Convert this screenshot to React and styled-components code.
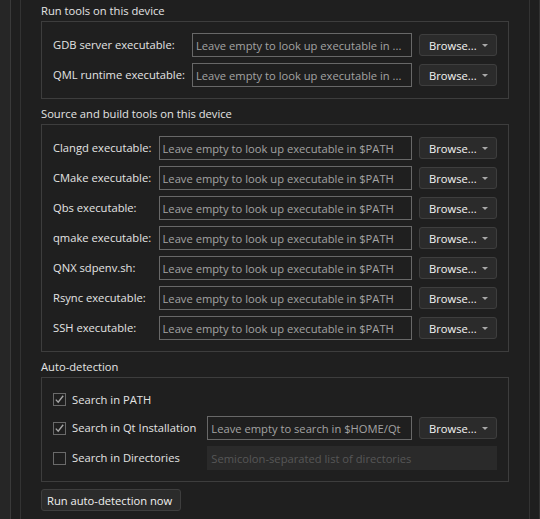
import React from 'react';
import styled, { createGlobalStyle } from 'styled-components';

const Global = createGlobalStyle`
  html, body { margin: 0; padding: 0; background: #1f1f1f; }
  body {
    font-family: "Open Sans", "Noto Sans", sans-serif;
    font-size: 11.2px;
    color: #e4e4e4;
  }
  * { box-sizing: border-box; }
`;

const Window = styled.div`
  display: flex;
  width: 540px;
  height: 519px;
  overflow: hidden;
  background: #1f1f1f;
`;

const SideRail = styled.div`
  flex: 0 0 11px;
  background: #262626;
  border-right: 1px solid #3a3a3a;
`;

const Gutter = styled.div`
  flex: 0 0 ${p => p.$w}px;
  border-right: ${p => (p.$line ? '1px solid #333333' : 'none')};
`;

const ScrollArea = styled.div`
  flex: 0 0 510px;
  border-left: 1px solid #333333;
  border-right: 1px solid #333333;
  padding: 3px 20px 0;
  display: flex;
  flex-direction: column;
  gap: 7px;
`;

const GroupBox = styled.section`
  display: flex;
  flex-direction: column;
`;

const GroupTitle = styled.div`
  line-height: 16px;
  margin-bottom: 2px;
  padding-top: 1px;
  margin-top: -1px;
  color: #e4e4e4;
`;

const Frame = styled.div`
  border: 1px solid #3d3d3d;
  padding: 11px;
  display: grid;
  grid-template-columns: auto 1fr auto;
  column-gap: 7px;
  row-gap: 6px;
  align-items: center;
`;

const Label = styled.label`
  line-height: 16px;
  white-space: nowrap;
  color: #e4e4e4;
`;

const PathInput = styled.input`
  height: 24px;
  min-width: 0;
  width: 100%;
  padding: 0 3px;
  font: inherit;
  color: #e4e4e4;
  background: ${p => (p.disabled ? '#2a2a2a' : '#1f1f1f')};
  border: 1px solid ${p => (p.disabled ? '#2a2a2a' : '#686868')};
  border-radius: 0;
  outline: none;
  text-overflow: ellipsis;
  grid-column: ${p => (p.$span ? '2 / span 2' : 'auto')};
  &::placeholder {
    color: ${p => (p.disabled ? '#575757' : '#a3a3a3')};
    opacity: 1;
  }
`;

const BrowseButton = styled.button`
  width: 78px;
  height: 22px;
  display: flex;
  align-items: center;
  justify-content: space-between;
  padding: 0 8px 0 9px;
  font: inherit;
  color: #f4f4f4;
  background: #2b2b2b;
  border: 1px solid #3e3e3e;
  border-radius: 3px;
`;

const Arrow = styled.span`
  width: 0;
  height: 0;
  border-left: 3px solid transparent;
  border-right: 3px solid transparent;
  border-top: 3px solid #a8a8a8;
`;

const PushButton = styled.button`
  align-self: flex-start;
  height: 22px;
  padding: 0 8px 0 5px;
  font: inherit;
  color: #f0f0f0;
  background: #2b2b2b;
  border: 1px solid #3e3e3e;
  border-radius: 3px;
`;

const CheckLabel = styled.label`
  display: flex;
  align-items: center;
  gap: 6px;
  height: ${p => (p.$tall ? '21px' : 'auto')};
  padding-right: 4px;
  line-height: 16px;
  white-space: nowrap;
  color: #e4e4e4;
`;

const Box = styled.span`
  flex: 0 0 13px;
  width: 13px;
  height: 13px;
  border: 1px solid #6a6a6a;
  background: #1f1f1f;
  display: flex;
  align-items: center;
  justify-content: center;
`;

const Browse = () => (
  <BrowseButton type="button">
    <span>Browse...</span>
    <Arrow />
  </BrowseButton>
);

const Check = ({ checked, children, tall }) => (
  <CheckLabel $tall={tall}>
    <Box>
      {checked && (
        <svg width="11" height="11" viewBox="0 0 11 11">
          <path d="M1.8 5.6 L4.2 8.2 L9.2 1.8" fill="none" stroke="#a6a6a6" strokeWidth="1.4" />
        </svg>
      )}
    </Box>
    <span>{children}</span>
  </CheckLabel>
);

const PATH_HINT = 'Leave empty to look up executable in $PATH';

const runTools = [
  ['GDB server executable:', 'Leave empty to look up executable in ...'],
  ['QML runtime executable:', 'Leave empty to look up executable in ...'],
];

const buildTools = [
  'Clangd executable:',
  'CMake executable:',
  'Qbs executable:',
  'qmake executable:',
  'QNX sdpenv.sh:',
  'Rsync executable:',
  'SSH executable:',
];

export default function App() {
  return (
    <>
      <Global />
      <Window>
        <SideRail />
        <Gutter $w={9} />
        <ScrollArea>
          <GroupBox>
            <GroupTitle>Run tools on this device</GroupTitle>
            <Frame>
              {runTools.map(([label, hint]) => (
                <React.Fragment key={label}>
                  <Label>{label}</Label>
                  <PathInput placeholder={hint} />
                  <Browse />
                </React.Fragment>
              ))}
            </Frame>
          </GroupBox>

          <GroupBox>
            <GroupTitle>Source and build tools on this device</GroupTitle>
            <Frame>
              {buildTools.map(label => (
                <React.Fragment key={label}>
                  <Label>{label}</Label>
                  <PathInput placeholder={PATH_HINT} />
                  <Browse />
                </React.Fragment>
              ))}
            </Frame>
          </GroupBox>

          <GroupBox>
            <GroupTitle>Auto-detection</GroupTitle>
            <Frame>
              <Check checked tall>Search in PATH</Check>
              <span />
              <span />
              <Check checked>Search in Qt Installation</Check>
              <PathInput placeholder="Leave empty to search in $HOME/Qt" />
              <Browse />
              <Check>Search in Directories</Check>
              <PathInput $span disabled placeholder="Semicolon-separated list of directories" />
            </Frame>
          </GroupBox>

          <PushButton type="button">Run auto-detection now</PushButton>
        </ScrollArea>
        <Gutter $w={10} $line />
      </Window>
    </>
  );
}
